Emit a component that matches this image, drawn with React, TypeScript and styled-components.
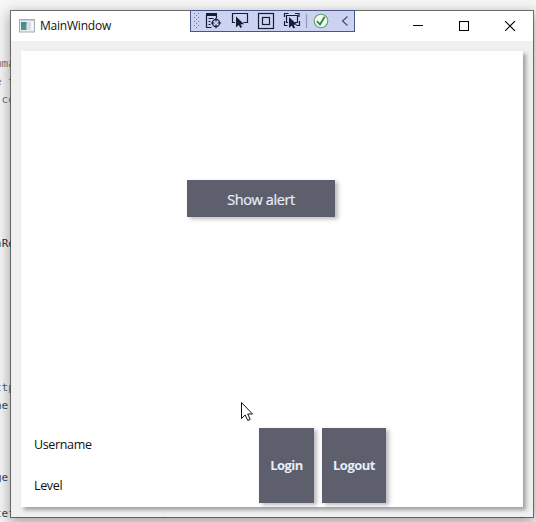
import React from "react";
import styled, { createGlobalStyle } from "styled-components";

const Global = createGlobalStyle`
  html, body { margin: 0; padding: 0; overflow: hidden; }
  * { box-sizing: border-box; }
`;

const Desktop = styled.div`
  position: relative;
  width: 536px;
  height: 522px;
  overflow: hidden;
  background: #f7f7f7;
  font-family: "Open Sans", "Noto Sans", sans-serif;
`;

const Code = styled.div`
  display: grid;
  grid-auto-rows: 18px;
  padding-top: 55px;
  margin-left: -5px;
  font: 11px/18px "DejaVu Sans Mono", monospace;
`;

const CodeLine = styled.div<{ $color: string }>`
  color: ${(p) => p.$color};
  white-space: pre;
  height: 18px;
`;

const Blue = styled.span`
  color: #3b83bd;
`;

const Window = styled.section`
  position: absolute;
  left: 10px;
  top: 10px;
  width: 524px;
  height: 508px;
  display: flex;
  flex-direction: column;
  background: #f0f0f0;
  background-clip: padding-box;
  border: 1px solid rgba(70, 70, 72, 0.75);
  box-shadow: 0 4px 13px 1px rgba(0, 0, 0, 0.34);
`;

const TitleBar = styled.header`
  display: flex;
  align-items: center;
  height: 30px;
  flex: none;
  padding-left: 8px;
  background: #fff;
`;

const Title = styled.span`
  flex: 1;
  margin-left: 5px;
  font-size: 12px;
  line-height: 18px;
  letter-spacing: -0.22px;
  color: #111;
`;

const Controls = styled.div`
  display: flex;
  align-items: center;
  gap: 35px;
  padding-right: 17px;

  svg {
    display: block;
  }
`;

const DebugBar = styled.div`
  position: absolute;
  left: 179px;
  top: -1px;
  width: 165px;
  height: 22px;
  border: 1px solid #4a5684;
  background: #ccd3f2;
`;

const Panel = styled.main`
  display: flex;
  flex-direction: column;
  width: 502px;
  height: 456px;
  margin: 10px 0 0 10px;
  background: #fff;
  box-shadow: 3px 3px 4px rgba(0, 0, 0, 0.34);
`;

const AlertArea = styled.div`
  display: flex;
  padding: 129px 0 0 166px;
  height: 377px;
`;

const Button = styled.button<{ $w: number; $h: number; $bold?: boolean }>`
  width: ${(p) => p.$w}px;
  height: ${(p) => p.$h}px;
  flex: none;
  padding: ${(p) => (p.$bold ? "0 0 2px 0" : "2px 0 0 0")};
  border: 0;
  background: #5d606c;
  color: #e8edfa;
  font-family: "Open Sans", "Noto Sans", sans-serif;
  font-size: ${(p) => (p.$bold ? 13 : 14.5)}px;
  font-weight: ${(p) => (p.$bold ? 700 : 400)};
  letter-spacing: ${(p) => (p.$bold ? -0.5 : -0.4)}px;
  -webkit-text-stroke: ${(p) => (p.$bold ? 0 : 0.2)}px #e8edfa;
  box-shadow: 3px 2px 4px rgba(60, 60, 80, 0.35);
`;

const Footer = styled.footer`
  display: flex;
  height: 75px;
`;

const Labels = styled.div`
  display: flex;
  flex-direction: column;
  gap: 23px;
  width: 238px;
  padding: 8px 0 0 13px;
  font-size: 12.5px;
  line-height: 18px;
  letter-spacing: -0.35px;
  color: #111;
`;

const Actions = styled.div`
  display: flex;
  gap: 8px;
`;

const Cursor = styled.svg`
  position: absolute;
  left: 240px;
  top: 401px;
`;

const lines: Record<number, [string, string]> = {
  0: ["mma", "#77777b"],
  1: ["e t", "#77777b"],
  2: [" co", "#77777b"],
  10: ["nRe", "#25384b"],
  18: ["ttp", "#4a6784"],
  19: ["ne", "#31495d"],
  23: ["ge", "#31495d"],
  25: ["tef,                     ,                                                     ,", "#31495d"],
};

const AppIcon = () => (
  <svg width="16" height="14" viewBox="0 0 16 14">
    <rect x=".5" y=".5" width="15" height="12.5" fill="#e9eef3" stroke="#a6aeb7" />
    <path d="M1 1.5h14" stroke="#c8d0d8" />
    <rect x="2" y="3" width="5.5" height="8" fill="#4f967f" />
    <path d="M2 3h5.5v2L2 8z" fill="#4c7da0" opacity=".6" />
    <rect x="8.5" y="3" width="3" height="8" fill="#d4dce7" />
    <rect x="12.5" y="3" width="1.5" height="8" fill="#f9fafb" />
  </svg>
);

const pointer = "M0 0v11l2.8-2.4 1.5 2.8 1.8-1-1.5-2.6h3.6z";

const DebugIcons = () => (
  <svg width="163" height="20" viewBox="191 11 163 20" fill="none" stroke="#191d32" strokeWidth="1.2">
    <g fill="#69749f" stroke="none">
      {[13, 17, 21, 25].map((y) => (
        <React.Fragment key={y}>
          <rect x="194" y={y} width="1" height="1" />
          <rect x="198" y={y} width="1" height="1" />
          <rect x="196" y={y + 2} width="1" height="1" />
        </React.Fragment>
      ))}
    </g>
    <path d="M206 14.5h11" strokeWidth="3" />
    <path d="M206.5 15v12.5h5M216.5 16v2M208.5 18.5h5M208.5 21.5h2M208.5 24.5h2" />
    <circle cx="216" cy="23" r="3.6" />
    <path d="M216 17.8v3.7M216 24.5v3.7M210.8 23h3.7M217.5 23h3.7" />
    <path d="M235 22.5h-2.5v-9h15v9h-4" />
    <path d={pointer} transform="translate(236 16.5)" fill="#191d32" stroke="none" />
    <rect x="258.5" y="13.5" width="15" height="15" />
    <rect x="262.5" y="17.5" width="7" height="7" />
    <path d="M284.5 17v-3.5h4M295 13.5h4V17M284.5 21v4.5h3M299.5 21v4.5h-3M288 22.5h-1.5v-7h11v7H295" />
    <path d={pointer} transform="translate(289 17)" fill="#191d32" stroke="none" />
    <path d="M306.5 14v14" stroke="#939abb" />
    <circle cx="321" cy="21" r="6.8" fill="#f2faf3" stroke="#5aa264" strokeWidth="1.1" />
    <path d="m317 21.2 3 3.3 4.7-7.8" stroke="#2b8938" strokeWidth="1.8" />
    <path d="m347.5 16.5-5 4.5 5 4.5" stroke="#414963" strokeWidth="1.1" />
  </svg>
);

export default function App() {
  return (
    <>
      <Global />
      <Desktop>
        <Code>
          {Array.from({ length: 26 }, (_, i) => {
            const [text, color] = lines[i] ?? ["", "#333"];
            return (
              <CodeLine key={i} $color={color}>
                {i === 10 ? <><Blue>n</Blue>Re</> : text}
              </CodeLine>
            );
          })}
        </Code>
        <Window>
          <TitleBar>
            <AppIcon />
            <Title>MainWindow</Title>
            <Controls>
              <svg width="11" height="10"><path d="M0 4.5h10" stroke="#000" /></svg>
              <svg width="11" height="10"><rect x=".5" y=".5" width="9" height="9" fill="none" stroke="#000" /></svg>
              <svg width="11" height="10"><path d="m0 0 10 10m0-10-10 10" stroke="#000" strokeWidth="1.1" /></svg>
            </Controls>
          </TitleBar>
          <Panel>
            <AlertArea>
              <Button $w={148} $h={37}>Show alert</Button>
            </AlertArea>
            <Footer>
              <Labels>
                <span>Username</span>
                <span>Level</span>
              </Labels>
              <Actions>
                <Button $w={55} $h={75} $bold>Login</Button>
                <Button $w={64} $h={75} $bold>Logout</Button>
              </Actions>
            </Footer>
          </Panel>
          <DebugBar>
            <DebugIcons />
          </DebugBar>
        </Window>
        <Cursor width="14" height="21" viewBox="0 0 14 21">
          <path d="M1.5 1.5v16l3.7-3.5 2.6 5.5 2.4-1.1-2.5-5.4h4.8z" fill="#fff" stroke="#111" />
        </Cursor>
      </Desktop>
    </>
  );
}
